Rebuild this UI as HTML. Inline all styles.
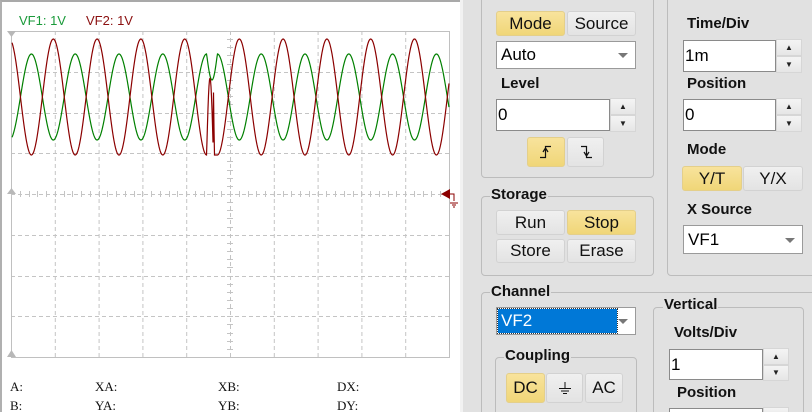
<!DOCTYPE html>
<html><head><meta charset="utf-8">
<style>
*{margin:0;padding:0;box-sizing:border-box}
html,body{width:812px;height:412px;overflow:hidden}
body{background:#e1e1e1;font-family:"Liberation Sans","DejaVu Sans",sans-serif;position:relative}
.a{position:absolute}
#scope{left:0;top:0;width:460px;height:412px;background:#fff;border-top:2px solid #a9a9a9;border-left:2px solid #b0b0b0}
.gb{position:absolute;border:1px solid #bcbcbc;border-radius:4px}
.lbl{position:absolute;font-weight:bold;font-size:15px;color:#111;background:#e1e1e1;padding:0 1px;line-height:18px}
.btn{position:absolute;border:1px solid #d2d2d2;border-radius:3px;background:linear-gradient(#f0f0f0,#e3e3e3);font-size:17px;color:#111;text-align:center;display:flex;align-items:center;justify-content:center}
.on{background:linear-gradient(#f8e39c,#f0d678);border-color:#e4cf8a}
.inp{position:absolute;background:#fff;border:1px solid #8a8a8a;font-size:17px;padding-left:1px;display:flex;align-items:center;color:#000}
.spin{position:absolute;width:26px}
.spin div{height:50%;border:1px solid #d6d6d6;background:linear-gradient(#f4f4f4,#e6e6e6);display:flex;align-items:center;justify-content:center;font-size:8px;color:#222}
.combo{position:absolute;background:#fff;border:1px solid #9a9a9a;font-size:17px;display:flex;align-items:center;padding-left:4px}
.combo:after{content:"";position:absolute;right:7px;top:50%;margin-top:-2px;border:5px solid transparent;border-top:5px solid #777;border-bottom:0}
</style></head><body>
<div id="scope" class="a"></div>
<div class="a" style="left:460px;top:0;width:3px;height:412px;background:#f2f2f2"></div>
<svg class="a" style="left:0;top:0" width="460" height="412">
<g stroke="#c4c4c4" stroke-width="1" stroke-dasharray="4,3" fill="none">
<path id="grid"/>
</g>
<rect x="11.5" y="31.5" width="438" height="326" fill="none" stroke="#c0c0c0"/>
<path id="ticks" stroke="#c4c4c4" fill="none"/>
<polygon points="7,31 16,31 11.5,37" fill="#b8b8b8"/>
<polygon points="7,194 16,194 11.5,188" fill="#b8b8b8"/>
<polygon points="7,357 16,357 11.5,350" fill="#b8b8b8"/>
<polygon points="441,194 450,189 450,199" fill="#8b0000"/>
<path d="M449,194h5v7M450,203h8M452,205h4M453,207h2" stroke="#8b0000" fill="none"/>
<path id="g" stroke="#008000" stroke-width="1.2" fill="none"/>
<path id="r" stroke="#8b0000" stroke-width="1.2" fill="none"/>
<text x="19" y="25" font-size="13" fill="#1a9a3a" font-family="Liberation Sans">VF1: 1V</text>
<text x="86" y="25" font-size="13" fill="#8b1010" font-family="Liberation Sans">VF2: 1V</text>
<g font-family="Liberation Serif" font-size="13" fill="#111">
<text x="10" y="391">A:</text><text x="95" y="391">XA:</text><text x="218" y="391">XB:</text><text x="337" y="391">DX:</text>
<text x="10" y="410">B:</text><text x="95" y="410">YA:</text><text x="218" y="410">YB:</text><text x="337" y="410">DY:</text>
</g>
</svg>
<script>
var d="";for(var i=0;i<=10;i++){var x=11.5+i*43.8;d+="M"+x+",31V357";}
for(var j=1;j<8;j++){var y=Math.round(31+j*40.75)+.5;d+="M11,"+y+"H449";}
document.getElementById("grid").setAttribute("d",d);
var t="";for(var k=0;k<50;k++){var x=Math.round(11+k*8.76)+.5;t+="M"+x+",191V197";}
for(var k=0;k<40;k++){var y=Math.round(31+k*8.15)+.5;t+="M227,"+y+"H233";}
document.getElementById("ticks").setAttribute("d",t);
var g="",r="";
for(var x=12;x<=449;x+=0.5){var ry,gy;
if(x<=206.6){var c=Math.cos(2*Math.PI*(x-53.3)/43.8);ry=97-58*c;gy=97+43*c;}
else if(x<217.4){var u=(x-206.6)/10.8;ry=155-77*Math.pow(Math.sin(Math.PI*Math.min(1,u*1.6)),1)*(u<0.62?1:0);if(u>=0.62){ry=155-77*Math.max(0,1-(u-0.62)/0.1);if(ry<155&&u>0.72)ry=155;}
gy=54+26*Math.sin(Math.PI*u);}
else{var c=Math.cos(2*Math.PI*(x-239.3)/43.8);ry=97-58*c;gy=97+43*c;}
r+=(x==12?"M":"L")+x+","+ry.toFixed(1);g+=(x==12?"M":"L")+x+","+gy.toFixed(1);}
document.getElementById("g").setAttribute("d",g);document.getElementById("r").setAttribute("d",r);
</script>

<!-- Trigger -->
<div class="gb" style="left:481px;top:-10px;width:173px;height:188px"></div>
<div class="btn on" style="left:496px;top:11px;width:69px;height:25px">Mode</div>
<div class="btn" style="left:567px;top:11px;width:69px;height:25px">Source</div>
<div class="combo" style="left:496px;top:41px;width:140px;height:28px">Auto</div>
<div class="lbl" style="left:500px;top:75px;background:none">Level</div>
<div class="inp" style="left:496px;top:99px;width:114px;height:32px">0</div>
<div class="spin" style="left:610px;top:98px;height:34px"><div>▲</div><div>▼</div></div>
<div class="btn on" style="left:527px;top:137px;width:38px;height:30px"><svg width="14" height="14" viewBox="0 0 14 14"><path d="M1,12.5H6.5V1.5H12M6.5,3L4,7M6.5,3L9,7" stroke="#111" stroke-width="1.2" fill="none"/></svg></div>
<div class="btn" style="left:567px;top:137px;width:37px;height:30px"><svg width="14" height="14" viewBox="0 0 14 14"><path d="M2,1.5H7.5V12.5H13M7.5,11L5,7M7.5,11L10,7" stroke="#111" stroke-width="1.2" fill="none"/></svg></div>

<!-- Storage -->
<div class="gb" style="left:481px;top:196px;width:173px;height:80px"></div>
<div class="lbl" style="left:490px;top:186px">Storage</div>
<div class="btn" style="left:496px;top:210px;width:69px;height:25px">Run</div>
<div class="btn on" style="left:567px;top:210px;width:69px;height:25px">Stop</div>
<div class="btn" style="left:496px;top:239px;width:69px;height:24px">Store</div>
<div class="btn" style="left:567px;top:239px;width:69px;height:24px">Erase</div>

<!-- Horizontal -->
<div class="gb" style="left:667px;top:-10px;width:160px;height:286px"></div>
<div class="lbl" style="left:686px;top:15px;background:none">Time/Div</div>
<div class="inp" style="left:683px;top:40px;width:93px;height:32px">1m</div>
<div class="spin" style="left:776px;top:39px;height:34px"><div>▲</div><div>▼</div></div>
<div class="lbl" style="left:686px;top:75px;background:none">Position</div>
<div class="inp" style="left:683px;top:99px;width:93px;height:32px">0</div>
<div class="spin" style="left:776px;top:98px;height:34px"><div>▲</div><div>▼</div></div>
<div class="lbl" style="left:686px;top:141px;background:none">Mode</div>
<div class="btn on" style="left:682px;top:166px;width:60px;height:25px">Y/T</div>
<div class="btn" style="left:743px;top:166px;width:60px;height:25px">Y/X</div>
<div class="lbl" style="left:686px;top:201px;background:none">X Source</div>
<div class="combo" style="left:683px;top:225px;width:120px;height:29px">VF1</div>

<!-- Channel -->
<div class="gb" style="left:481px;top:292px;width:345px;height:140px"></div>
<div class="lbl" style="left:490px;top:283px">Channel</div>
<div class="combo" style="left:496px;top:307px;width:140px;height:28px;padding:1px"><div style="background:#0078d7;color:#fff;width:119px;height:24px;padding-left:3px;line-height:24px;outline:1px dotted #333">VF2</div></div>
<div class="gb" style="left:495px;top:357px;width:142px;height:70px"></div>
<div class="lbl" style="left:504px;top:347px">Coupling</div>
<div class="btn on" style="left:506px;top:373px;width:39px;height:30px">DC</div>
<div class="btn" style="left:546px;top:373px;width:37px;height:30px"><svg width="14" height="14" viewBox="0 0 14 14"><path d="M7,1V7M1,7.5H13M3,10H11M5,12.5H9" stroke="#111" stroke-width="1" fill="none"/></svg></div>
<div class="btn" style="left:585px;top:373px;width:38px;height:30px">AC</div>

<div class="gb" style="left:653px;top:307px;width:151px;height:120px"></div>
<div class="lbl" style="left:663px;top:296px">Vertical</div>
<div class="lbl" style="left:673px;top:324px;background:none">Volts/Div</div>
<div class="inp" style="left:669px;top:349px;width:94px;height:31px">1</div>
<div class="spin" style="left:763px;top:348px;height:33px"><div>▲</div><div>▼</div></div>
<div class="lbl" style="left:676px;top:384px;background:none">Position</div>
<div class="inp" style="left:669px;top:408px;width:94px;height:20px"></div>
<div class="spin" style="left:763px;top:407px;height:20px"><div></div></div>
</body></html>
